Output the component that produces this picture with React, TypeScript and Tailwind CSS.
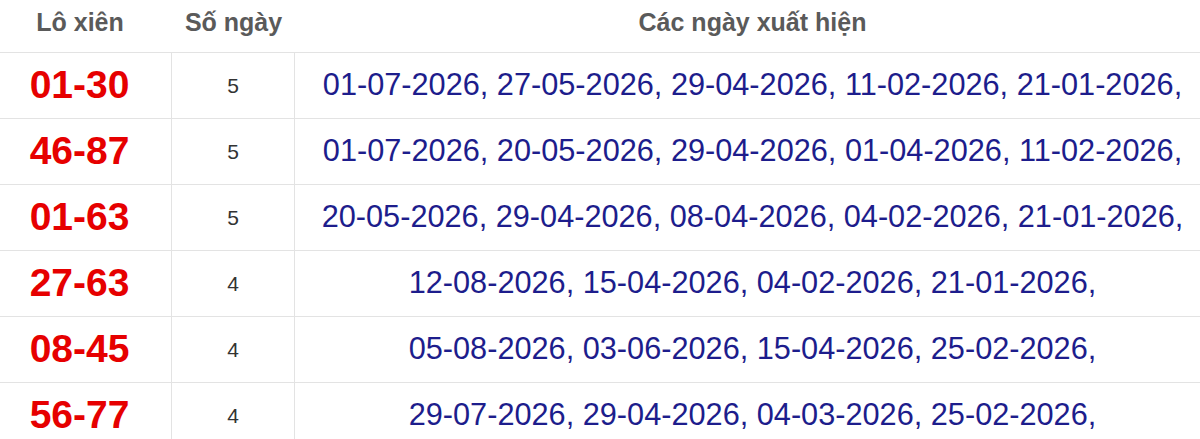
import React from 'react';

type Row = { pair: string; count: number; dates: string[] };

const rows: Row[] = [
  { pair: '01-30', count: 5, dates: ['01-07-2026', '27-05-2026', '29-04-2026', '11-02-2026', '21-01-2026'] },
  { pair: '46-87', count: 5, dates: ['01-07-2026', '20-05-2026', '29-04-2026', '01-04-2026', '11-02-2026'] },
  { pair: '01-63', count: 5, dates: ['20-05-2026', '29-04-2026', '08-04-2026', '04-02-2026', '21-01-2026'] },
  { pair: '27-63', count: 4, dates: ['12-08-2026', '15-04-2026', '04-02-2026', '21-01-2026'] },
  { pair: '08-45', count: 4, dates: ['05-08-2026', '03-06-2026', '15-04-2026', '25-02-2026'] },
  { pair: '56-77', count: 4, dates: ['29-07-2026', '29-04-2026', '04-03-2026', '25-02-2026'] },
];

export default function App() {
  return (
    <div className="w-[1200px] h-[439px] overflow-hidden bg-white font-['Liberation_Sans',Arial,sans-serif]">
      <div className="grid grid-cols-[172px_123px_1fr] h-[53px] border-b border-[#e3e3e3] items-center text-[25px] font-bold text-[#5a5a5a]">
        <div className="text-center pr-[12px] pb-[6px]">Lô xiên</div>
        <div className="text-center pb-[6px]">Số ngày</div>
        <div className="text-center pl-[10px] pb-[6px]">Các ngày xuất hiện</div>
      </div>
      {rows.map((r) => (
        <div key={r.pair} className="grid grid-cols-[172px_123px_1fr] h-[66px] border-b border-[#e3e3e3]">
          <div className="flex items-center justify-center pr-[12px] border-r border-[#e3e3e3] text-[39px] font-bold text-[#e60000]">
            {r.pair}
          </div>
          <div className="flex items-center justify-center border-r border-[#e3e3e3] text-[21px] text-[#333]">
            {r.count}
          </div>
          <div className="flex items-center justify-center pl-[10px] text-[30.7px] text-[#1d1d8c] whitespace-nowrap">
            {r.dates.map((d) => d + ',').join(' ')}
          </div>
        </div>
      ))}
    </div>
  );
}
